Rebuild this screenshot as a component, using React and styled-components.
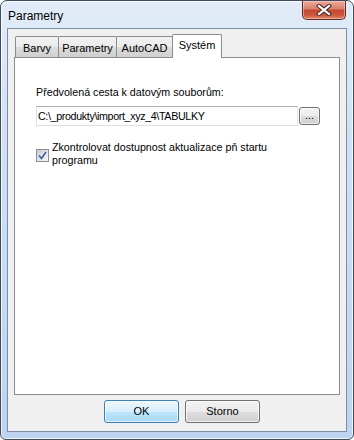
import styled, { createGlobalStyle } from 'styled-components'

const tabs = [
  { label: 'Barvy', width: 44 },
  { label: 'Parametry', width: 59 },
  { label: 'AutoCAD', width: 57 },
  { label: 'Systém', width: 50, active: true },
]

export default function App() {
  return (
    <>
      <GlobalStyle />
      <Window>
        <TitleBar>
          <Title>Parametry</Title>
          <CloseButton>
            <svg width="16" height="12" viewBox="0 0 16 12">
              <path d="M3 2 L13 10 M13 2 L3 10" stroke="#4a2a26" strokeWidth="4.2" strokeLinecap="square" />
              <path d="M3 2 L13 10 M13 2 L3 10" stroke="#ffffff" strokeWidth="2.2" strokeLinecap="square" />
            </svg>
          </CloseButton>
        </TitleBar>
        <Client>
          <TabStrip>
            {tabs.map((t) => (
              <Tab key={t.label} $width={t.width} $active={t.active}>
                {t.label}
              </Tab>
            ))}
          </TabStrip>
          <Panel>
            <Label>Předvolená cesta k datovým souborům:</Label>
            <PathRow>
              <PathInput>C:\_produkty\import_xyz_4\TABULKY</PathInput>
              <BrowseButton>...</BrowseButton>
            </PathRow>
            <CheckRow>
              <CheckBox>
                <svg width="9" height="9" viewBox="0 0 9 9">
                  <path d="M1 4.5 L3.5 7.5 L8 1" fill="none" stroke="#3d5a99" strokeWidth="1.6" />
                </svg>
              </CheckBox>
              <CheckText>Zkontrolovat dostupnost aktualizace pň startu programu</CheckText>
            </CheckRow>
          </Panel>
          <Footer>
            <DialogButton $default>OK</DialogButton>
            <DialogButton>Storno</DialogButton>
          </Footer>
        </Client>
      </Window>
    </>
  )
}

const GlobalStyle = createGlobalStyle`
  html, body {
    margin: 0;
    padding: 0;
    background: #ffffff;
  }
  * {
    box-sizing: border-box;
  }
`

const Window = styled.div`
  width: 354px;
  height: 440px;
  display: flex;
  flex-direction: column;
  border: 1px solid #3f4b5a;
  border-radius: 7px 7px 6px 6px;
  background: linear-gradient(180deg, #e2ecf8 0%, #d0e1f4 30%, #bcd4f0 100%);
  box-shadow: inset 0 0 0 1px rgba(255, 255, 255, 0.75);
  font-family: 'Liberation Sans', Arial, sans-serif;
  color: #000;
  overflow: hidden;
`

const TitleBar = styled.div`
  height: 27px;
  display: flex;
  align-items: flex-start;
`

const Title = styled.div`
  font-size: 12px;
  line-height: 14px;
  padding: 8px 0 0 7px;
  flex: 1;
`

const CloseButton = styled.div`
  width: 44px;
  height: 19px;
  margin-right: 7px;
  border: 1px solid #5b2a22;
  border-top: none;
  border-radius: 0 0 5px 5px;
  background: linear-gradient(180deg, #e9a99b 0%, #d8806d 45%, #c4462d 50%, #cc5a40 80%, #e08a6a 100%);
  box-shadow: inset 0 0 0 1px rgba(255, 220, 210, 0.5);
  display: flex;
  align-items: center;
  justify-content: center;
`

const Client = styled.div`
  flex: 1;
  display: flex;
  flex-direction: column;
  margin: 0 6px 7px 6px;
  border: 1px solid #7b8ea6;
  background: #f0f0f0;
  padding: 5px 6px 0 6px;
`

const TabStrip = styled.div`
  height: 23px;
  display: flex;
  align-items: flex-end;
  padding-left: 1px;
`

const Tab = styled.div`
  width: ${(p) => p.$width}px;
  height: ${(p) => (p.$active ? 24 : 21)}px;
  margin-left: -1px;
  margin-bottom: ${(p) => (p.$active ? -1 : 0)}px;
  &:first-child {
    margin-left: 0;
  }
  position: relative;
  z-index: ${(p) => (p.$active ? 1 : 0)};
  border: 1px solid #898c95;
  border-bottom: none;
  border-radius: 2px 2px 0 0;
  background: ${(p) =>
    p.$active ? '#ffffff' : 'linear-gradient(180deg, #f2f2f2 0%, #ebebeb 50%, #dddddd 51%, #cfcfcf 100%)'};
  font-size: 11px;
  line-height: 13px;
  display: flex;
  justify-content: center;
  padding-top: ${(p) => (p.$active ? 4 : 5)}px;
`

const Panel = styled.div`
  height: 338px;
  border: 1px solid #898c95;
  background: #ffffff;
  padding: 28px 0 0 21px;
  display: flex;
  flex-direction: column;
`

const Label = styled.div`
  font-size: 10.7px;
  line-height: 13px;
`

const PathRow = styled.div`
  display: flex;
  align-items: center;
  gap: 1px;
  margin-top: 7px;
`

const PathInput = styled.div`
  width: 262px;
  height: 20px;
  border: 1px solid #dbdfe6;
  border-top-color: #abadb3;
  font-size: 10.7px;
  letter-spacing: -0.35px;
  line-height: 18px;
  padding-left: 1px;
  white-space: nowrap;
`

const BrowseButton = styled.div`
  width: 21px;
  height: 18px;
  border: 1px solid #707070;
  border-radius: 3px;
  background: linear-gradient(180deg, #f2f2f2 0%, #ebebeb 50%, #dddddd 51%, #cfcfcf 100%);
  box-shadow: inset 0 0 0 1px rgba(255, 255, 255, 0.7);
  font-size: 11px;
  line-height: 14px;
  text-align: center;
`

const CheckRow = styled.div`
  display: flex;
  align-items: flex-start;
  gap: 3px;
  margin-top: 15px;
`

const CheckBox = styled.div`
  width: 13px;
  height: 13px;
  margin-top: 8px;
  border: 1px solid #8e8f8f;
  background: linear-gradient(135deg, #c4cad6 0%, #e4e8ef 60%, #f6f7f9 100%);
  display: flex;
  align-items: center;
  justify-content: center;
`

const CheckText = styled.div`
  width: 225px;
  font-size: 10.7px;
  line-height: 13px;
`

const Footer = styled.div`
  display: flex;
  gap: 6px;
  padding: 5px 0 0 90px;
`

const DialogButton = styled.div`
  width: 75px;
  height: 23px;
  border: 1px solid ${(p) => (p.$default ? '#3c7fb1' : '#707070')};
  border-radius: 3px;
  background: ${(p) =>
    p.$default
      ? 'linear-gradient(180deg, #eaf6fd 0%, #d9f0fc 50%, #bee6fd 51%, #a7d9f5 100%)'
      : 'linear-gradient(180deg, #f2f2f2 0%, #ebebeb 50%, #dddddd 51%, #cfcfcf 100%)'};
  box-shadow: inset 0 0 0 1px rgba(255, 255, 255, 0.7);
  font-size: 11px;
  line-height: 21px;
  text-align: center;
`
